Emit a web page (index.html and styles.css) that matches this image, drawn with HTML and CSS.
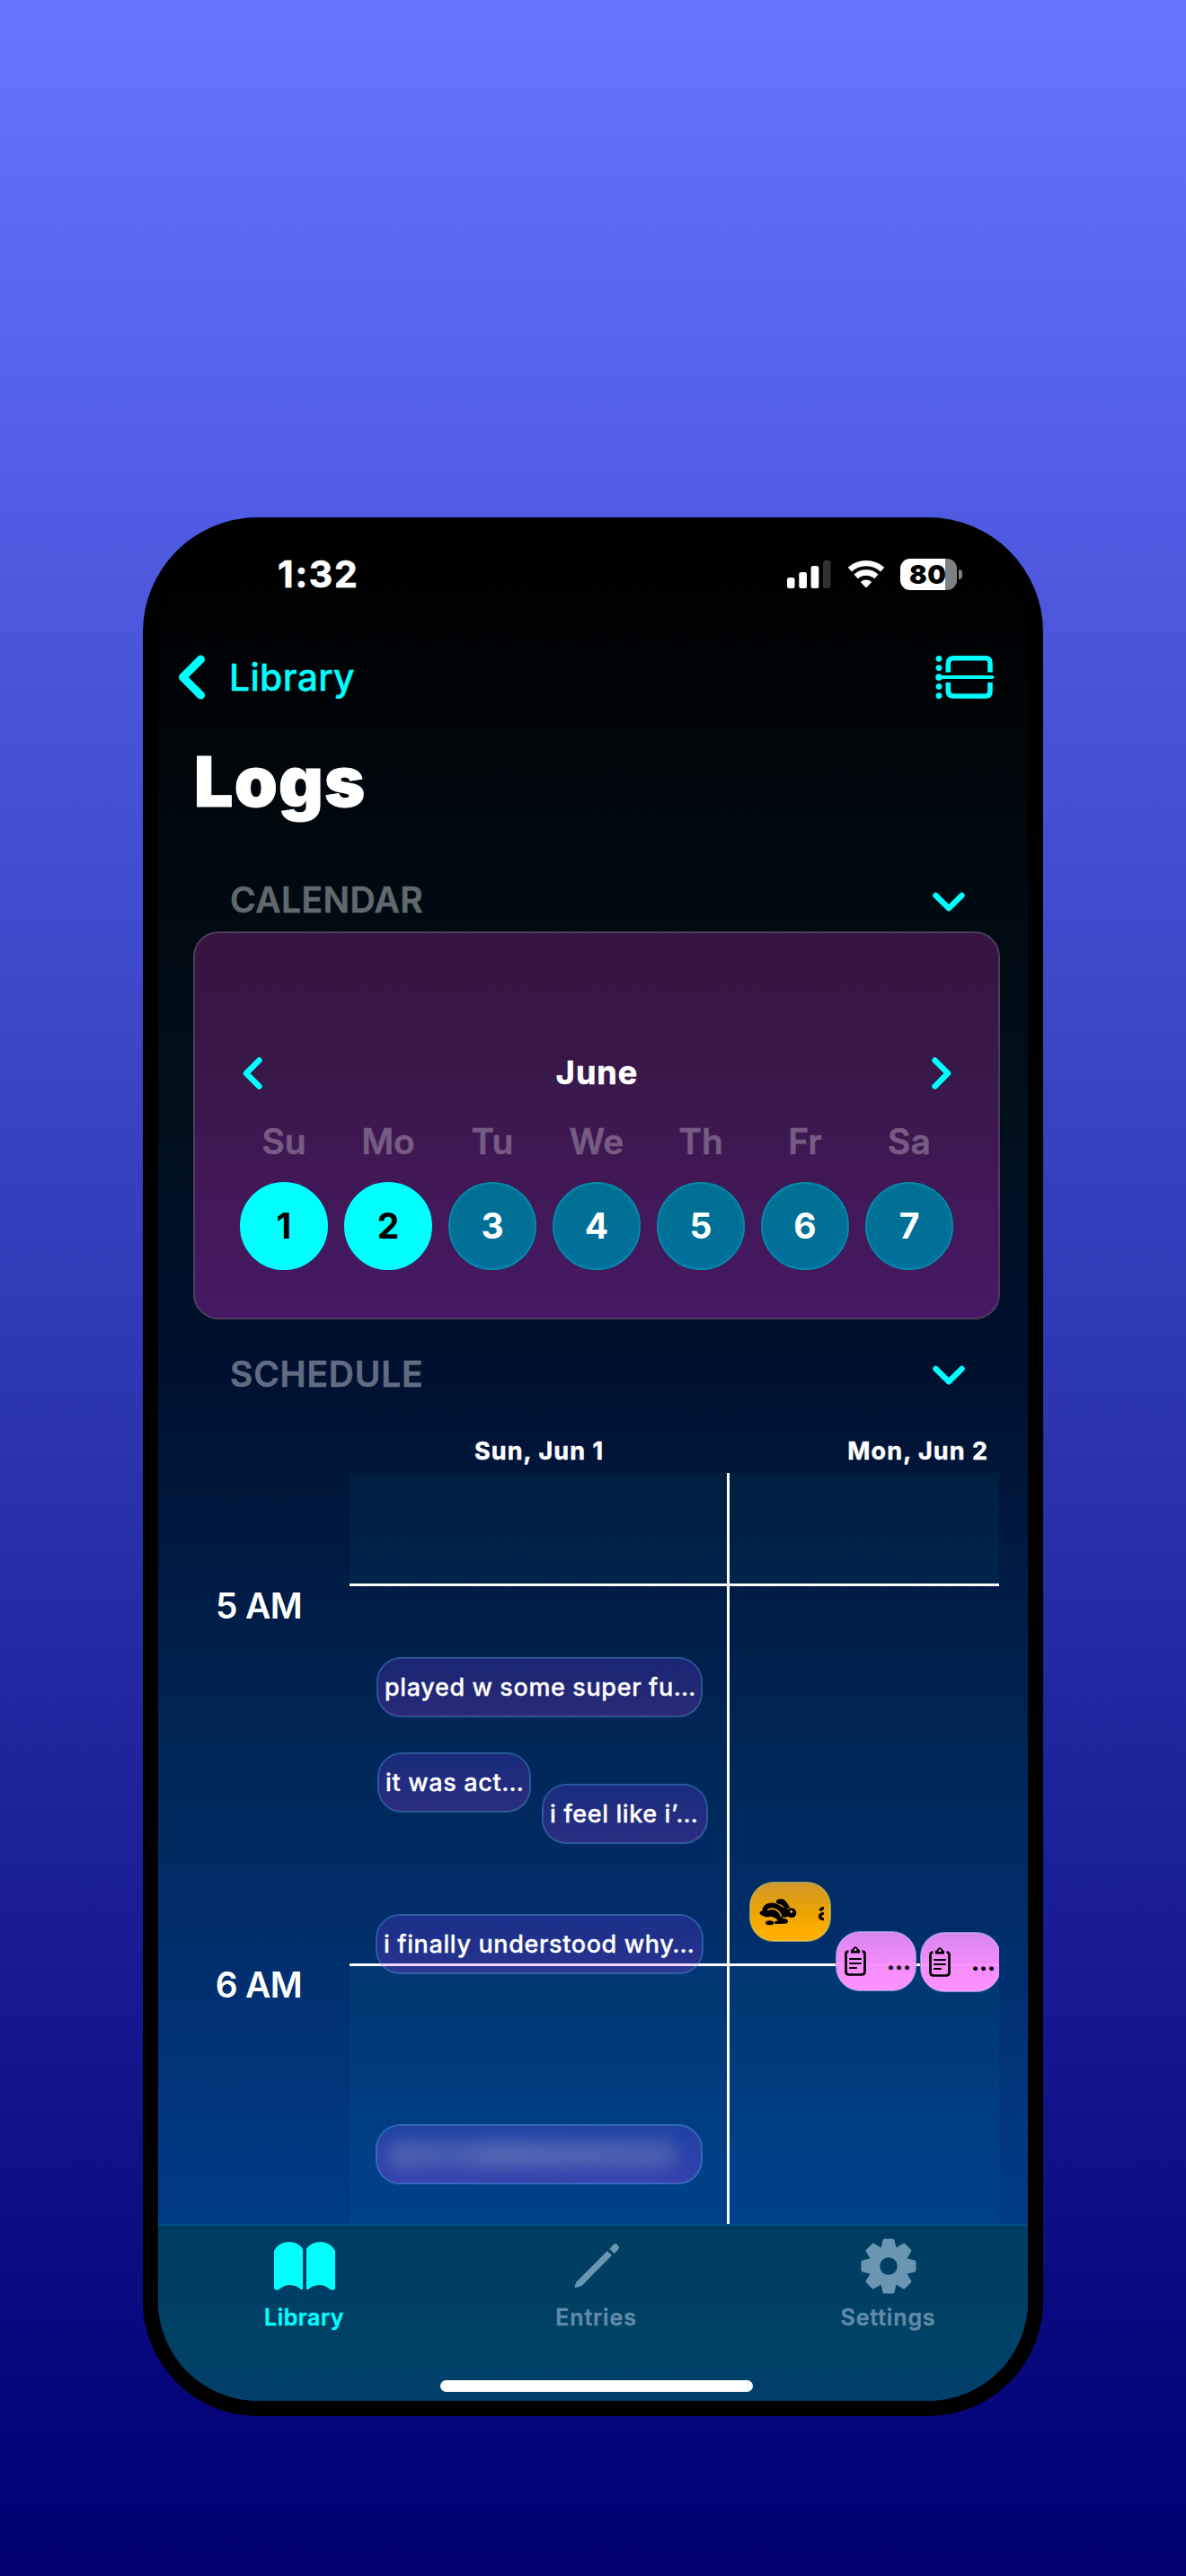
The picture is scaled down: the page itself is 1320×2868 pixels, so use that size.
FILE: index.html
```html
<!DOCTYPE html>
<html lang="en">
<head>
<meta charset="utf-8">
<title>Logs</title>
<link rel="stylesheet" href="styles.css">
</head>
<body>
<main class="phone">
  <div class="screen">
    <div class="status">
      <span class="time">1:32</span>
      <div class="status-icons">
        <svg class="signal" width="49" height="32" viewBox="0 0 49 32" fill="#fff">
          <rect x="0" y="20" width="8.5" height="12" rx="2.5"/>
          <rect x="13.3" y="14" width="8.7" height="18" rx="2.5"/>
          <rect x="26.6" y="7" width="8.7" height="25" rx="2.5"/>
          <rect x="40" y="1" width="8.5" height="31" rx="2.5" fill="#303334"/>
        </svg>
        <svg class="wifi" width="42" height="32" viewBox="-21 -31.5 42 32" fill="none" stroke="#fff" stroke-width="6.3">
          <path d="M-18.2-20.4A27.4 27.4 0 0 1 18.2-20.4"/>
          <path d="M-11.4-12.6A17 17 0 0 1 11.4-12.6"/>
          <path d="M-6.2-6.6A9 9 0 0 1 6.2-6.6L.8-.8Q0-.1-.8-.8Z" fill="#fff" stroke="none"/>
        </svg>
        <div class="battery"><span class="level">80</span></div>
        <span class="nub"></span>
      </div>
    </div>

    <nav class="nav">
      <a class="back">
        <svg width="32" height="50" viewBox="0 0 32 50" fill="none" stroke="#0ff" stroke-width="9" stroke-linecap="round" stroke-linejoin="round"><path d="M25.5 5 5.5 25l20 20"/></svg>
        <span>Library</span>
      </a>
      <svg width="66" height="50" viewBox="0 0 66 50" fill="#0ff">
        <circle cx="4" cy="4.3" r="3.4"/><circle cx="4" cy="14.6" r="3.4"/><circle cx="4" cy="25" r="3.8"/><circle cx="4" cy="35.3" r="3.4"/><circle cx="4" cy="45.6" r="3.4"/>
        <rect x="3" y="23" width="62.5" height="4" rx="2"/>
        <path d="M14.3 19.5V10Q14.3 3.8 20.5 3.8h36Q61 3.8 61 10v9.5M14.3 30.8v9.5Q14.3 46 20.5 46h36Q61 46 61 40.3V30.8" fill="none" stroke="#0ff" stroke-width="5.6"/>
      </svg>
    </nav>

    <h1 class="title">Logs</h1>

    <header class="section-head">
      <h2>CALENDAR</h2>
      <svg width="38" height="24" viewBox="0 0 38 24" class="chev"><path d="M4.500 5 19 19.300 33.500 5"/></svg>
    </header>
    <section class="card">
      <div class="month">
        <svg width="24" height="38" viewBox="0 0 24 38" class="chev"><path d="M19.500 4.500 5 19l14.500 14.500"/></svg>
        <strong>June</strong>
        <svg width="24" height="38" viewBox="0 0 24 38" class="chev"><path d="M4.500 4.500 19 19 4.500 33.500"/></svg>
      </div>
      <div class="week names"><span>Su</span><span>Mo</span><span>Tu</span><span>We</span><span>Th</span><span>Fr</span><span>Sa</span></div>
      <div class="week days">
        <span class="day on">1</span><span class="day on">2</span><span class="day">3</span><span class="day">4</span><span class="day">5</span><span class="day">6</span><span class="day">7</span>
      </div>
    </section>

    <header class="section-head schedule-head">
      <h2>SCHEDULE</h2>
      <svg width="38" height="24" viewBox="0 0 38 24" class="chev"><path d="M4.500 5 19 19.300 33.500 5"/></svg>
    </header>
    <div class="dates"><span>Sun, Jun 1</span><span class="second">Mon, Jun 2</span></div>
    <section class="schedule">
      <div class="hours"><span>5 AM</span><span>6 AM</span></div>
      <div class="grid">
        <div class="band band-4 lit"></div>
        <div class="band band-5"></div>
        <div class="band band-6 lit"></div>
        <div class="divider"></div>
        <div class="event e1">played w some super fu…</div>
        <div class="event e2">it was act…</div>
        <div class="event e3">i feel like i’…</div>
        <div class="event e4">i finally understood why…</div>
        <div class="event e5"><span class="veil"></span></div>
        <div class="event e6 amber">
          <svg width="43" height="31" viewBox="75 130 129 93">
            <path d="M132 139Q142 129 156 135 168 143 178 164L164 167Q153 152 138 150 129 146 132 139Z"/>
            <path d="M76 180Q78 175 85 173 86 150 110 147 130 145 146 157L172 169 172 192Q160 196 150 195 152 199 158 199 169 200 171 208 171 216 160 216L134 217Q126 217 124 213 128 207 138 206 132 196 112 192 98 196 88 190 78 187 76 180Z"/>
            <circle cx="183" cy="180" r="16"/><ellipse cx="110" cy="213" rx="14" ry="7.500"/>
            <path d="M103 170Q117 163 130 169 145 177 149 193" fill="none" stroke="#eea409" stroke-width="5"/>
            <circle cx="182" cy="176" r="4.500" fill="#f5b030"/>
          </svg>
          <span class="peek">a</span>
        </div>
        <div class="event e7 pink">
          <svg width="24" height="34" viewBox="0 0 24 34"><use href="#clip"/></svg>
          <span class="dots">…</span>
        </div>
        <div class="event e8 pink">
          <svg width="24" height="34" viewBox="0 0 24 34"><use href="#clip"/></svg>
          <span class="dots">…</span>
        </div>
      </div>
    </section>

    <footer class="tabs">
      <div class="tab active">
        <svg width="68" height="64" viewBox="0 -5 68 64" fill="#0ff">
          <path id="page" d="M0 10Q5 .3 16 0 27 0 32 8V52Q31.500 54 29.500 52.500 25 48.300 18 48 11 48 5.500 53 1 55 0 51.500Z"/>
          <use href="#page" transform="matrix(-1 0 0 1 68 0)"/>
        </svg>
        <span>Library</span>
      </div>
      <div class="tab">
        <svg width="52" height="64" viewBox="0 -6 52 64" fill="#6b96b2">
          <path d="M38 9l5 5L10 47.400Q8 48.600 2.700 49.900 1.300 49.700 1.700 48.500 2.500 44.500 4.300 42.700ZM40.300 6.700 44.500 2.200Q46.500 0 48.700 2L50 3.300Q52 5.500 50 7.700L45.500 12Z"/>
        </svg>
        <span>Entries</span>
      </div>
      <div class="tab">
        <svg width="64" height="64" viewBox="-32 -32 64 64" fill="#6b96b2">
          <circle r="16" fill="none" stroke="#6b96b2" stroke-width="12.500"/>
          <path id="tooth" d="M-4.500-28.500H4.500L7-18H-7Z" stroke="#6b96b2" stroke-width="4" stroke-linejoin="round"/>
          <use href="#tooth" transform="rotate(45)"/><use href="#tooth" transform="rotate(90)"/><use href="#tooth" transform="rotate(135)"/><use href="#tooth" transform="rotate(180)"/><use href="#tooth" transform="rotate(225)"/><use href="#tooth" transform="rotate(270)"/><use href="#tooth" transform="rotate(315)"/>
        </svg>
        <span>Settings</span>
      </div>
      <div class="home-bar"></div>
    </footer>
  </div>
</main>
<svg width="0" height="0" class="defs">
  <defs>
    <g id="clip">
      <path d="M4.500 5.500Q1.500 5.500 1.500 8.500V28Q1.500 31.500 5 31.500H19Q22.500 31.500 22.500 28V8.500Q22.500 5.500 19.500 5.500" fill="none" stroke="#000" stroke-width="2.700"/>
      <path fill-rule="evenodd" d="M7 7.500V4.500Q7 3 9 3 9.500.3 12 .3T15 3Q17 3 17 4.500V7.500ZM12 2.200A1.500 1.500 0 1 0 12 5.200 1.500 1.500 0 1 0 12 2.200Z"/>
      <path d="M6 14H18M6 19H18M6 24H13" stroke="#000" stroke-width="2.200" stroke-linecap="round"/>
    </g>
  </defs>
</svg>
</body>
</html>
```
FILE: styles.css
```css
* { box-sizing: border-box; }

body {
  margin: 0;
  height: 2868px;
  padding: 576px 159px 0;
  overflow: hidden;
  font-family: Inter, "Liberation Sans", sans-serif;
  color: #fff;
  background: linear-gradient(#6676ff 0, #505be3 576px, #404acc 1040px, #2f38b4 1500px, #1f249d 1960px, #101189 2400px, #04057a 2700px, #00006e 2868px);
}

.defs { position: absolute; }

.phone {
  width: 1002px;
  height: 2114px;
  padding: 17px;
  border-radius: 128px;
  background: #000;
}

.screen {
  display: flex;
  flex-direction: column;
  width: 968px;
  height: 2080px;
  border-radius: 111px;
  overflow: hidden;
  background: linear-gradient(#000 0, #000306 160px, #000a12 420px, #00101c 650px, #001130 940px, #001a42 1140px, #002758 1370px, #003070 1620px, #003b88 1880px);
}

.status {
  display: flex;
  justify-content: space-between;
  align-items: center;
  height: 92px;
  padding: 0 73px 0 133px;
}

.time { font-size: 41px; font-weight: 700; letter-spacing: 1.7px; -webkit-text-stroke: .6px #fff; }

.status-icons { display: flex; align-items: center; }
.wifi { margin-left: 18px; }

.battery {
  display: flex;
  align-items: center;
  width: 63px;
  height: 35px;
  margin-left: 17px;
  padding-left: 10px;
  border-radius: 11px;
  background: linear-gradient(90deg, #fff 50px, #808080 50px);
}

.level { color: #000; font-size: 29px; font-weight: 900; letter-spacing: .6px; }
.nub { width: 4px; height: 11px; margin-left: 2px; border-radius: 0 5px 5px 0; background: #808080; }

.nav {
  display: flex;
  justify-content: space-between;
  align-items: center;
  height: 138px;
  padding: 0 37px 0 22px;
}

.back { display: flex; align-items: center; gap: 25px; color: #0ff; font-size: 41px; font-weight: 500; letter-spacing: .28px; -webkit-text-stroke: .4px #0ff; }

.title { margin: 0; padding-left: 40px; font-size: 77px; line-height: 94px; font-weight: 900; letter-spacing: 1.2px; -webkit-text-stroke: 1px #fff; }

.section-head {
  display: flex;
  justify-content: space-between;
  align-items: center;
  height: 70px;
  margin-top: 50px;
  padding: 0 69px 0 80px;
  color: #5f696e;
}

.section-head h2 { margin: -2px 0 0; font-size: 39px; font-weight: 600; letter-spacing: .4px; -webkit-text-stroke: .5px currentColor; }
.section-head .chev { margin-top: 4px; }
.schedule-head { height: 120px; margin-top: 0; color: #616c83; }
.schedule-head h2 { margin-top: 0; letter-spacing: .76px; }

.chev { fill: none; stroke: #0ff; stroke-width: 6.4; stroke-linecap: round; stroke-linejoin: round; }

.card {
  width: 898px;
  height: 432px;
  margin-left: 39px;
  padding: 131px 41px 0;
  border: 2px solid #4c3c5d;
  border-radius: 28px;
  background: linear-gradient(#371440, #381849 35%, #401856 65%, #461965);
}

.month { display: flex; justify-content: space-between; align-items: center; height: 50px; padding: 0 10px 0 11px; }
.month strong { margin-top: -2px; font-size: 36px; font-weight: 700; letter-spacing: 1px; -webkit-text-stroke: .6px #fff; }

.week { display: grid; grid-template-columns: repeat(7, 116px); justify-items: center; }
.names { margin-top: 26px; line-height: 50px; font-size: 39px; font-weight: 600; color: #765c84; -webkit-text-stroke: .5px #765c84; }
.days { margin-top: 20px; }

.day {
  width: 98px;
  height: 98px;
  border: 2px solid #008baa;
  border-radius: 50%;
  background: linear-gradient(#007092, #00709c);
  text-align: center;
  line-height: 94px;
  font-size: 39px;
  font-weight: 700;
}

.day.on { color: #000; background: #0ff; border-color: #0ff; }

.dates { display: flex; height: 51px; padding-left: 352px; font-size: 27px; line-height: 54px; font-weight: 700; letter-spacing: 1.1px; -webkit-text-stroke: .5px #fff; }
.dates .second { margin-left: 271px; }

.schedule { display: flex; height: 836px; }
.hours { display: flex; flex-direction: column; gap: 372px; width: 213px; padding: 123px 53px 0 0; text-align: right; font-size: 39px; line-height: 50px; font-weight: 600; letter-spacing: -.7px; }

.grid { position: relative; width: 723px; overflow: hidden; }
.band { border-bottom: 3px solid #fff; }
.band-4 { height: 126px; }
.band-5 { height: 423px; }
.band-6 { height: 287px; border: 0; }
.lit { background: rgba(0, 255, 255, .035); }
.divider { position: absolute; top: 0; left: 420px; width: 3px; height: 100%; background: #fff; }

.event {
  position: absolute;
  display: flex;
  align-items: center;
  height: 67px;
  padding-left: 8px;
  border: 1px solid rgba(0, 200, 230, .35);
  border-radius: 27px;
  box-shadow: inset 0 0 0 1px rgba(255, 255, 255, .16);
  background: linear-gradient(rgba(110, 60, 255, .22), rgba(195, 64, 255, .22));
  font-size: 27px;
  font-weight: 500;
  letter-spacing: .62px;
  -webkit-text-stroke: .3px currentColor;
  white-space: nowrap;
}

.e1 { left: 30px; top: 205px; width: 363px; }
.e2 { left: 31px; top: 311px; width: 171px; letter-spacing: .65px; }
.e3 { left: 214px; top: 346px; width: 185px; letter-spacing: .6px; }
.e4 { left: 29px; top: 491px; width: 365px; }
.e5 { left: 29px; top: 725px; width: 364px; background: linear-gradient(rgba(110, 80, 255, .27), rgba(165, 70, 255, .32)); }
.e6 { left: 445px; top: 455px; width: 91px; }
.e7 { left: 541px; top: 510px; width: 90px; }
.e8 { left: 635px; top: 511px; width: 90px; }

.veil { width: 322px; height: 30px; margin-left: 4px; border-radius: 14px; background: linear-gradient(90deg, rgba(125, 140, 190, .5), rgba(115, 130, 190, .4) 22%, rgba(125, 140, 190, .52) 35%, rgba(120, 135, 190, .45)); filter: blur(10px); }

.amber { background: linear-gradient(#cf982b, #eca300 50%, #ffaf00 85%); color: #000; padding-left: 10px; border-color: #7b9a70; }
.peek { width: 7px; margin-left: 22px; overflow: hidden; font-weight: 600; }
.pink { background: linear-gradient(rgba(222, 136, 245, .97), rgba(250, 143, 255, .97) 50%, #ff92ff); color: #000; padding-left: 9px; border-color: #7a8fd0; }
.dots { margin-left: 23px; font-weight: 700; }

.tabs {
  position: relative;
  display: grid;
  grid-template-columns: repeat(3, 325px);
  height: 197px;
  border-top: 2px solid #005089;
  background: linear-gradient(#003c62, #004166 60%, #004069);
}

.tab { display: flex; flex-direction: column; align-items: center; padding-top: 13px; color: #5f8aa8; font-size: 25px; font-weight: 600; letter-spacing: .85px; -webkit-text-stroke: .4px currentColor; }
.tab span { margin-top: 10px; line-height: 30px; }
.tab.active { color: #0ff; letter-spacing: .5px; }

.home-bar { position: absolute; left: 314px; bottom: 10px; width: 348px; height: 13px; border-radius: 7px; background: #fff; }
```
